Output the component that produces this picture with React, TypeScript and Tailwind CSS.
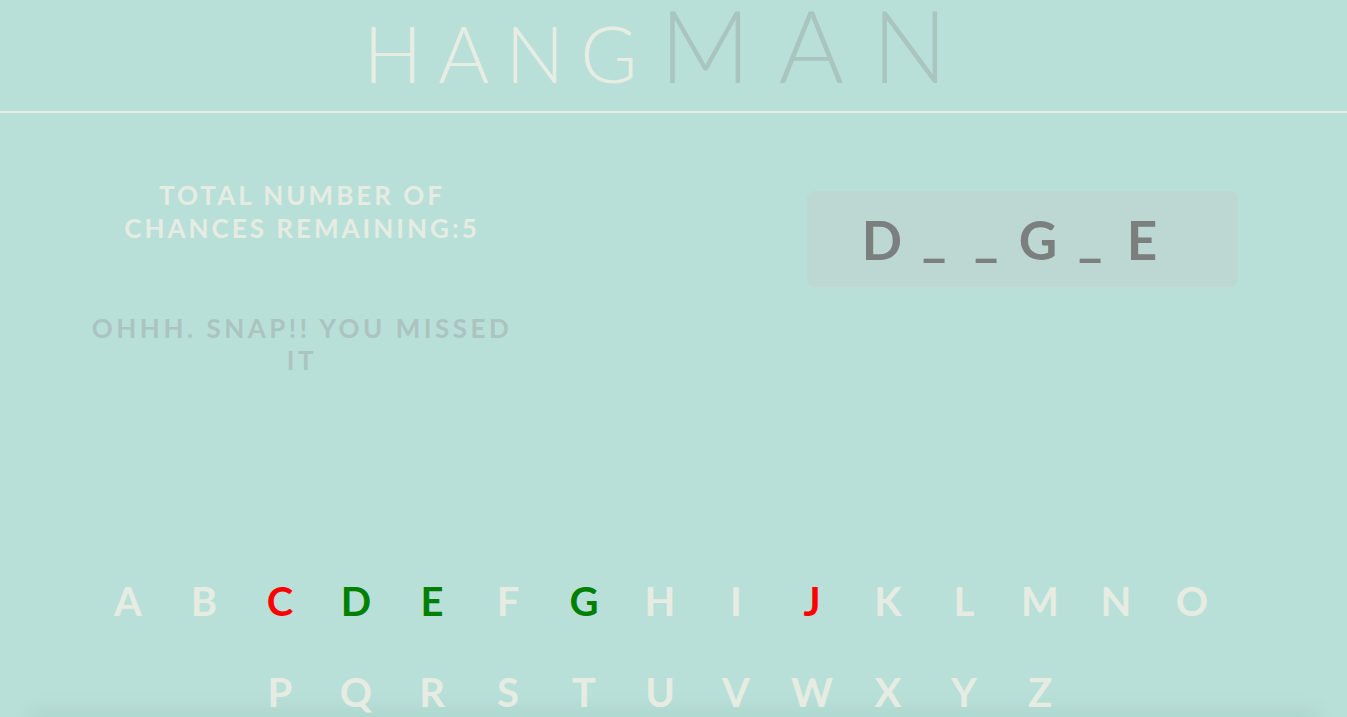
import React from 'react';

const ROW_ONE = 'ABCDEFGHIJKLMNO'.split('');
const ROW_TWO = 'PQRSTUVWXYZ'.split('');

const missed = ['C', 'J'];
const found = ['D', 'E', 'G'];
const WORD = ['D', '_', '_', 'G', '_', 'E'];

function letterColor(l: string) {
  if (missed.includes(l)) return 'text-[#ff0000]';
  if (found.includes(l)) return 'text-[#008000]';
  return 'text-[#e6ece2]';
}

function LetterRow({ letters }: { letters: string[] }) {
  return (
    <div className="flex justify-center">
      {letters.map((l) => (
        <button
          key={l}
          className={`w-[76px] h-[91px] flex items-center justify-center text-[40px] font-bold ${letterColor(l)}`}
        >
          {l}
        </button>
      ))}
    </div>
  );
}

export default function App() {
  return (
    <div
      className="min-h-screen bg-[#b8e0d9] overflow-hidden"
      style={{ fontFamily: 'Lato, "Open Sans", sans-serif' }}
    >
      {/* Header */}
      <header className="h-[113px] flex items-end justify-center border-b-2 border-[#e8ede3] pb-[18px] pr-[8px]">
        <h1 className="flex items-baseline leading-[80px]">
          <span className="text-[78px] font-light tracking-[16px] text-[#e8ede3]">HANG</span>
          <span className="ml-[6px] text-[100px] font-light tracking-[28px] text-[#aac5c0]">MAN</span>
        </h1>
      </header>

      {/* Game area */}
      <main className="flex pt-[66px] h-[440px]">
        <div className="w-[604px] flex flex-col items-center text-center uppercase font-bold">
          <p className="w-[400px] text-[26px] leading-[33px] tracking-[3px] text-[#e6ece2]">
            Total number of chances remaining:5
          </p>
          <p className="mt-[67px] w-[440px] text-[26px] leading-[32px] tracking-[3.5px] text-[#abc4bf]">
            Ohhh. Snap!! You missed it
          </p>
        </div>
        <div className="ml-[203px] mt-[12px] w-[431px] h-[96px] rounded-[8px] bg-[#bdd8d3] flex items-center pl-[49px]">
          {WORD.map((c, i) => (
            <span
              key={i}
              className={`w-[52px] text-center text-[53px] font-bold leading-none text-[#7b7f7e] ${c === '_' ? 'relative -top-[5px]' : ''}`}
            >
              {c}
            </span>
          ))}
        </div>
      </main>

      {/* Alphabet */}
      <section className="pr-[27px] pt-[2px]">
        <LetterRow letters={ROW_ONE} />
        <LetterRow letters={ROW_TWO} />
      </section>

      <div className="mx-[30px] h-[200px] -mt-[20px] shadow-[0_-8px_16px_rgba(80,130,120,0.1)]" />
    </div>
  );
}
